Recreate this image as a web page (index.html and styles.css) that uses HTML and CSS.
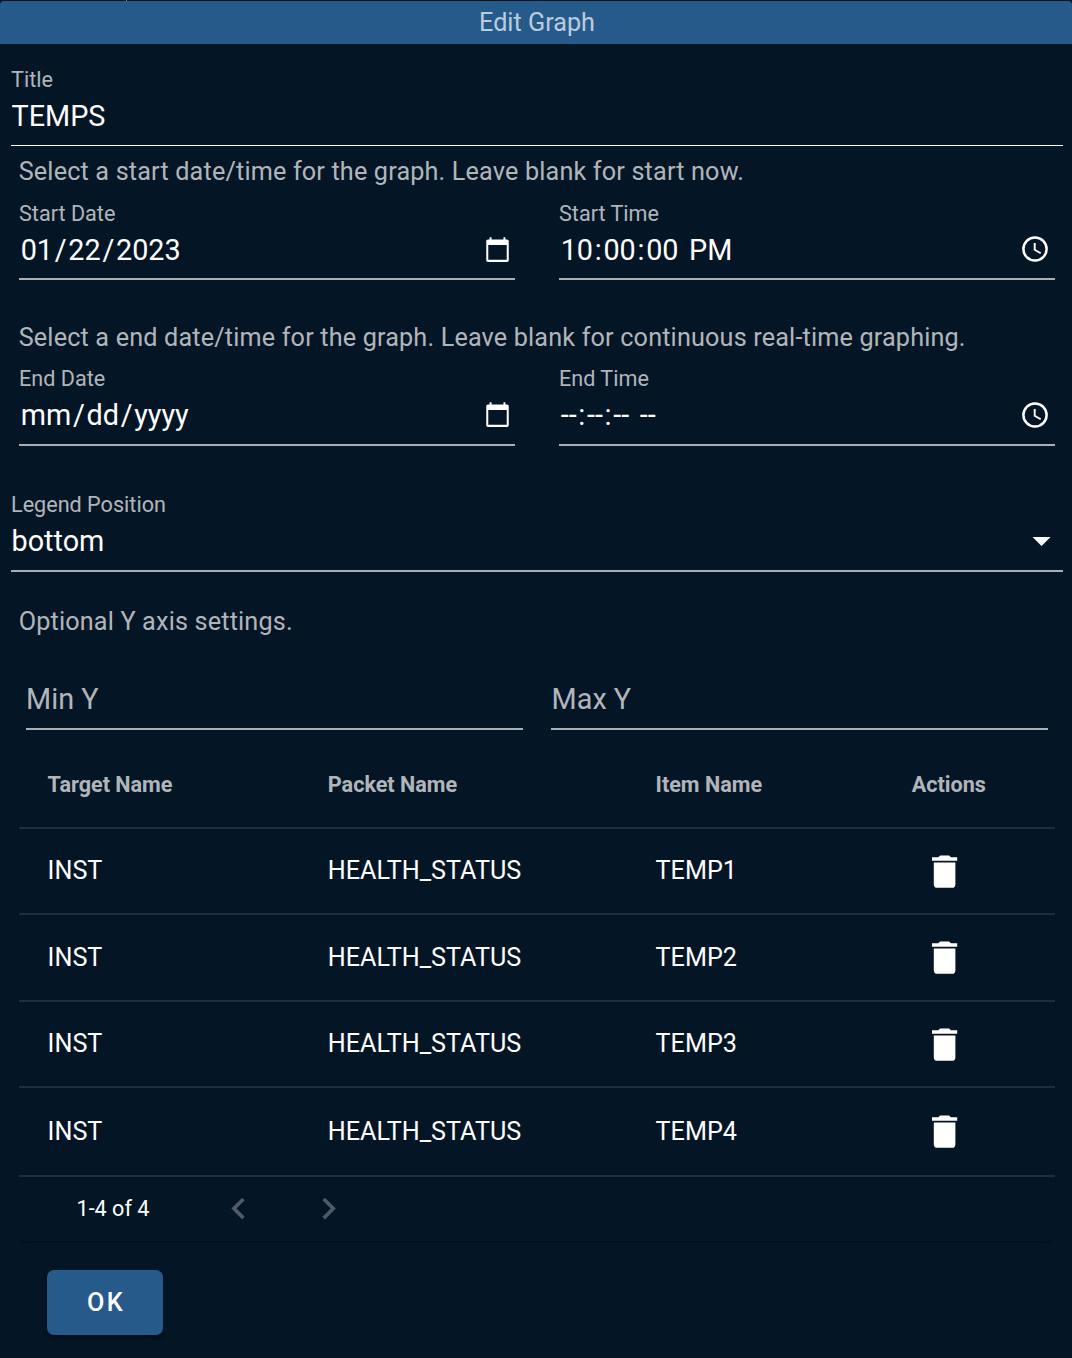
FILE: index.html
```html
<!DOCTYPE html>
<html lang="en">
<head>
<meta charset="utf-8">
<title>Edit Graph</title>
<link rel="stylesheet" href="styles.css">
</head>
<body>
<svg width="0" height="0" class="defs">
  <symbol id="calendar" viewBox="0 0 24 24"><path d="M20.500 3H19V1h-1.700v2H6.700V1H5v2H3.500C2.700 3 2 3.700 2 4.500v17c0 .8.700 1.500 1.500 1.500h17c.8 0 1.500-.7 1.500-1.500v-17c0-.8-.7-1.500-1.500-1.500zM20.200 21.200H3.800V8h16.400z"/></symbol>
  <symbol id="clock" viewBox="0 0 26 26"><circle cx="13" cy="13" r="11.600" fill="none" stroke="currentColor" stroke-width="2.500"/><path d="M12.700 7v6.700l6 3.500" fill="none" stroke="currentColor" stroke-width="1.900"/></symbol>
  <symbol id="delete" viewBox="0 0 24 24"><path d="M19,4H15.500L14.500,3H9.500L8.500,4H5V6H19M6,19A2,2 0 0,0 8,21H16A2,2 0 0,0 18,19V7H6V19Z"/></symbol>
</svg>
<div class="backdrop"><span class="tick"></span></div>
<header class="bar">Edit Graph</header>
<main class="dialog">
  <div class="field title-field">
    <label>Title</label>
    <div class="value">TEMPS</div>
  </div>
  <p class="hint">Select a start date/time for the graph. Leave blank for start now.</p>
  <div class="pair start">
    <div class="field">
      <label>Start Date</label>
      <div class="value"><span class="parts"><i>01</i>/<i>22</i>/<i>2023</i></span><svg class="cal"><use href="#calendar"/></svg></div>
    </div>
    <div class="field">
      <label>Start Time</label>
      <div class="value"><span class="parts"><i>10</i>:<i>00</i>:<i>00</i> <i>PM</i></span><svg class="clk"><use href="#clock"/></svg></div>
    </div>
  </div>
  <p class="hint end-hint">Select a end date/time for the graph. Leave blank for continuous real-time graphing.</p>
  <div class="pair end">
    <div class="field">
      <label>End Date</label>
      <div class="value"><span class="parts"><i>mm</i>/<i>dd</i>/<i>yyyy</i></span><svg class="cal"><use href="#calendar"/></svg></div>
    </div>
    <div class="field">
      <label>End Time</label>
      <div class="value"><span class="parts"><i>--</i>:<i>--</i>:<i>--</i> <i>--</i></span><svg class="clk"><use href="#clock"/></svg></div>
    </div>
  </div>
  <div class="field legend">
    <label>Legend Position</label>
    <div class="value">bottom<svg class="caret" viewBox="0 0 24 24"><path d="M7,10L12,15L17,10H7Z"/></svg></div>
  </div>
  <p class="hint axis-hint">Optional Y axis settings.</p>
  <div class="axis">
    <div class="axis-input">Min Y</div>
    <div class="axis-input max">Max Y</div>
  </div>
  <section class="table">
    <div class="row head"><span>Target Name</span><span>Packet Name</span><span>Item Name</span><span>Actions</span></div>
    <div class="row"><span>INST</span><span>HEALTH_STATUS</span><span>TEMP1</span><span class="action"><svg class="trash"><use href="#delete"/></svg></span></div>
    <div class="row tall"><span>INST</span><span>HEALTH_STATUS</span><span>TEMP2</span><span class="action"><svg class="trash"><use href="#delete"/></svg></span></div>
    <div class="row"><span>INST</span><span>HEALTH_STATUS</span><span>TEMP3</span><span class="action"><svg class="trash"><use href="#delete"/></svg></span></div>
    <div class="row last"><span>INST</span><span>HEALTH_STATUS</span><span>TEMP4</span><span class="action"><svg class="trash"><use href="#delete"/></svg></span></div>
    <div class="pager">
      <span class="range">1-4 of 4</span>
      <svg class="prev" viewBox="0 0 24 24"><path d="M15.410,16.580L10.830,12L15.410,7.410L14,6L8,12L14,18L15.410,16.580Z"/></svg>
      <svg class="next" viewBox="0 0 24 24"><path d="M8.590,16.580L13.170,12L8.590,7.410L10,6L16,12L10,18L8.590,16.580Z"/></svg>
    </div>
  </section>
  <button class="ok">OK</button>
</main>
</body>
</html>
```
FILE: styles.css
```css
* { box-sizing: border-box; }
body {
  margin: 0;
  width: 1072px;
  height: 1358px;
  overflow: hidden;
  background: #041525;
  color: #fff;
  font-family: Roboto, sans-serif;
}
svg { display: block; flex: none; fill: currentColor; }
.defs { position: absolute; }
.backdrop { height: 1px; background: #10111a; }
.tick { display: block; width: 1px; height: 1px; margin-left: 126px; background: #8a8c90; }
.bar {
  height: 43px;
  padding-left: 2px;
  border-radius: 4px 4px 0 0;
  background: #255a8b;
  color: rgba(255, 255, 255, .7);
  font-size: 25.2px;
  line-height: 43px;
  text-align: center;
}
.dialog { padding: 23px 9px 0 11px; }
.field { border-bottom: 2px solid #a9afb5; }
.field label {
  display: block;
  margin-bottom: 3px;
  color: rgba(255, 255, 255, .7);
  font-size: 21.6px;
  line-height: 26px;
}
.value {
  display: flex;
  align-items: center;
  justify-content: space-between;
  height: 49px;
  padding-bottom: 9px;
  font-size: 28.8px;
  line-height: 40px;
}
.title-field { border-bottom: 1px solid #fff; }
.title-field .value, .legend .value { padding-left: .5px; }
.hint {
  margin: 8px 0 0 7.700px;
  color: rgba(255, 255, 255, .7);
  font-size: 25.2px;
  line-height: 36px;
  letter-spacing: .17px;
  white-space: nowrap;
}
.pair { display: grid; grid-template-columns: 496px 496px; gap: 44px; margin: 11px 8px 0; }
.start .value { height: 48px; padding-bottom: 8px; }
.start .value svg { margin-bottom: 2px; }
.end { margin-top: 10px; }
.end-hint { margin-top: 40px; }
.parts { white-space: pre; }
.parts i { font-style: normal; padding: 0 1.7px; }
.cal { width: 27px; height: 27px; margin-right: 4px; }
.end .cal { margin-bottom: 1px; }
.clk { width: 26px; height: 26px; margin-right: 7px; }
.legend { margin-top: 46px; }
.caret { width: 43.200px; height: 43.200px; margin-right: .2px; }
.axis-hint { margin-top: 32px; }
.axis { display: grid; grid-template-columns: 497px 497px; gap: 28px; margin: 39px 0 0 15px; }
.axis-input {
  height: 51px;
  border-bottom: 2px solid #a9afb5;
  color: rgba(255, 255, 255, .7);
  font-size: 28.8px;
  line-height: 40px;
}
.max { padding-left: .6px; }
.table {
  margin: 13px 8px 0;
  height: 498px;
  border-radius: 7px;
  box-shadow: 0 2px 2px -1px rgba(0, 0, 0, .35);
}
.row {
  display: grid;
  grid-template-columns: 280.200px 327.800px 256.200px 1fr;
  align-items: center;
  height: 86px;
  padding-left: 28.6px;
  border-bottom: 2px solid #1f2e3c;
  font-size: 25.2px;
}
.row span { padding-bottom: 2px; }
.row .action { padding: 1px 0 0; }
.tall { height: 87px; }
.last { height: 89px; }
.tall span, .last span { padding-bottom: 0; }
.row.tall .action, .row.last .action { padding: 0; }
.head { color: rgba(255, 255, 255, .7); font-size: 21.6px; font-weight: 700; }
.trash { width: 43.200px; height: 43.200px; margin-left: 11px; }
.pager { display: flex; align-items: center; height: 64px; padding-left: 57.5px; font-size: 21.6px; }
.range { width: 140.200px; padding-bottom: 2px; }
.prev, .next { width: 43.200px; height: 43.200px; color: #4f5b66; }
.next { margin-left: 47px; }
.ok {
  display: block;
  width: 116px;
  height: 65px;
  margin: 29px 0 0 36px;
  padding: 0 0 0 2px;
  border: 0;
  border-radius: 7px;
  background: #255a8b;
  box-shadow: 0 3px 4px rgba(0, 0, 0, .35);
  color: #fff;
  font: 500 25.2px Roboto, sans-serif;
  letter-spacing: 2.25px;
}
```
